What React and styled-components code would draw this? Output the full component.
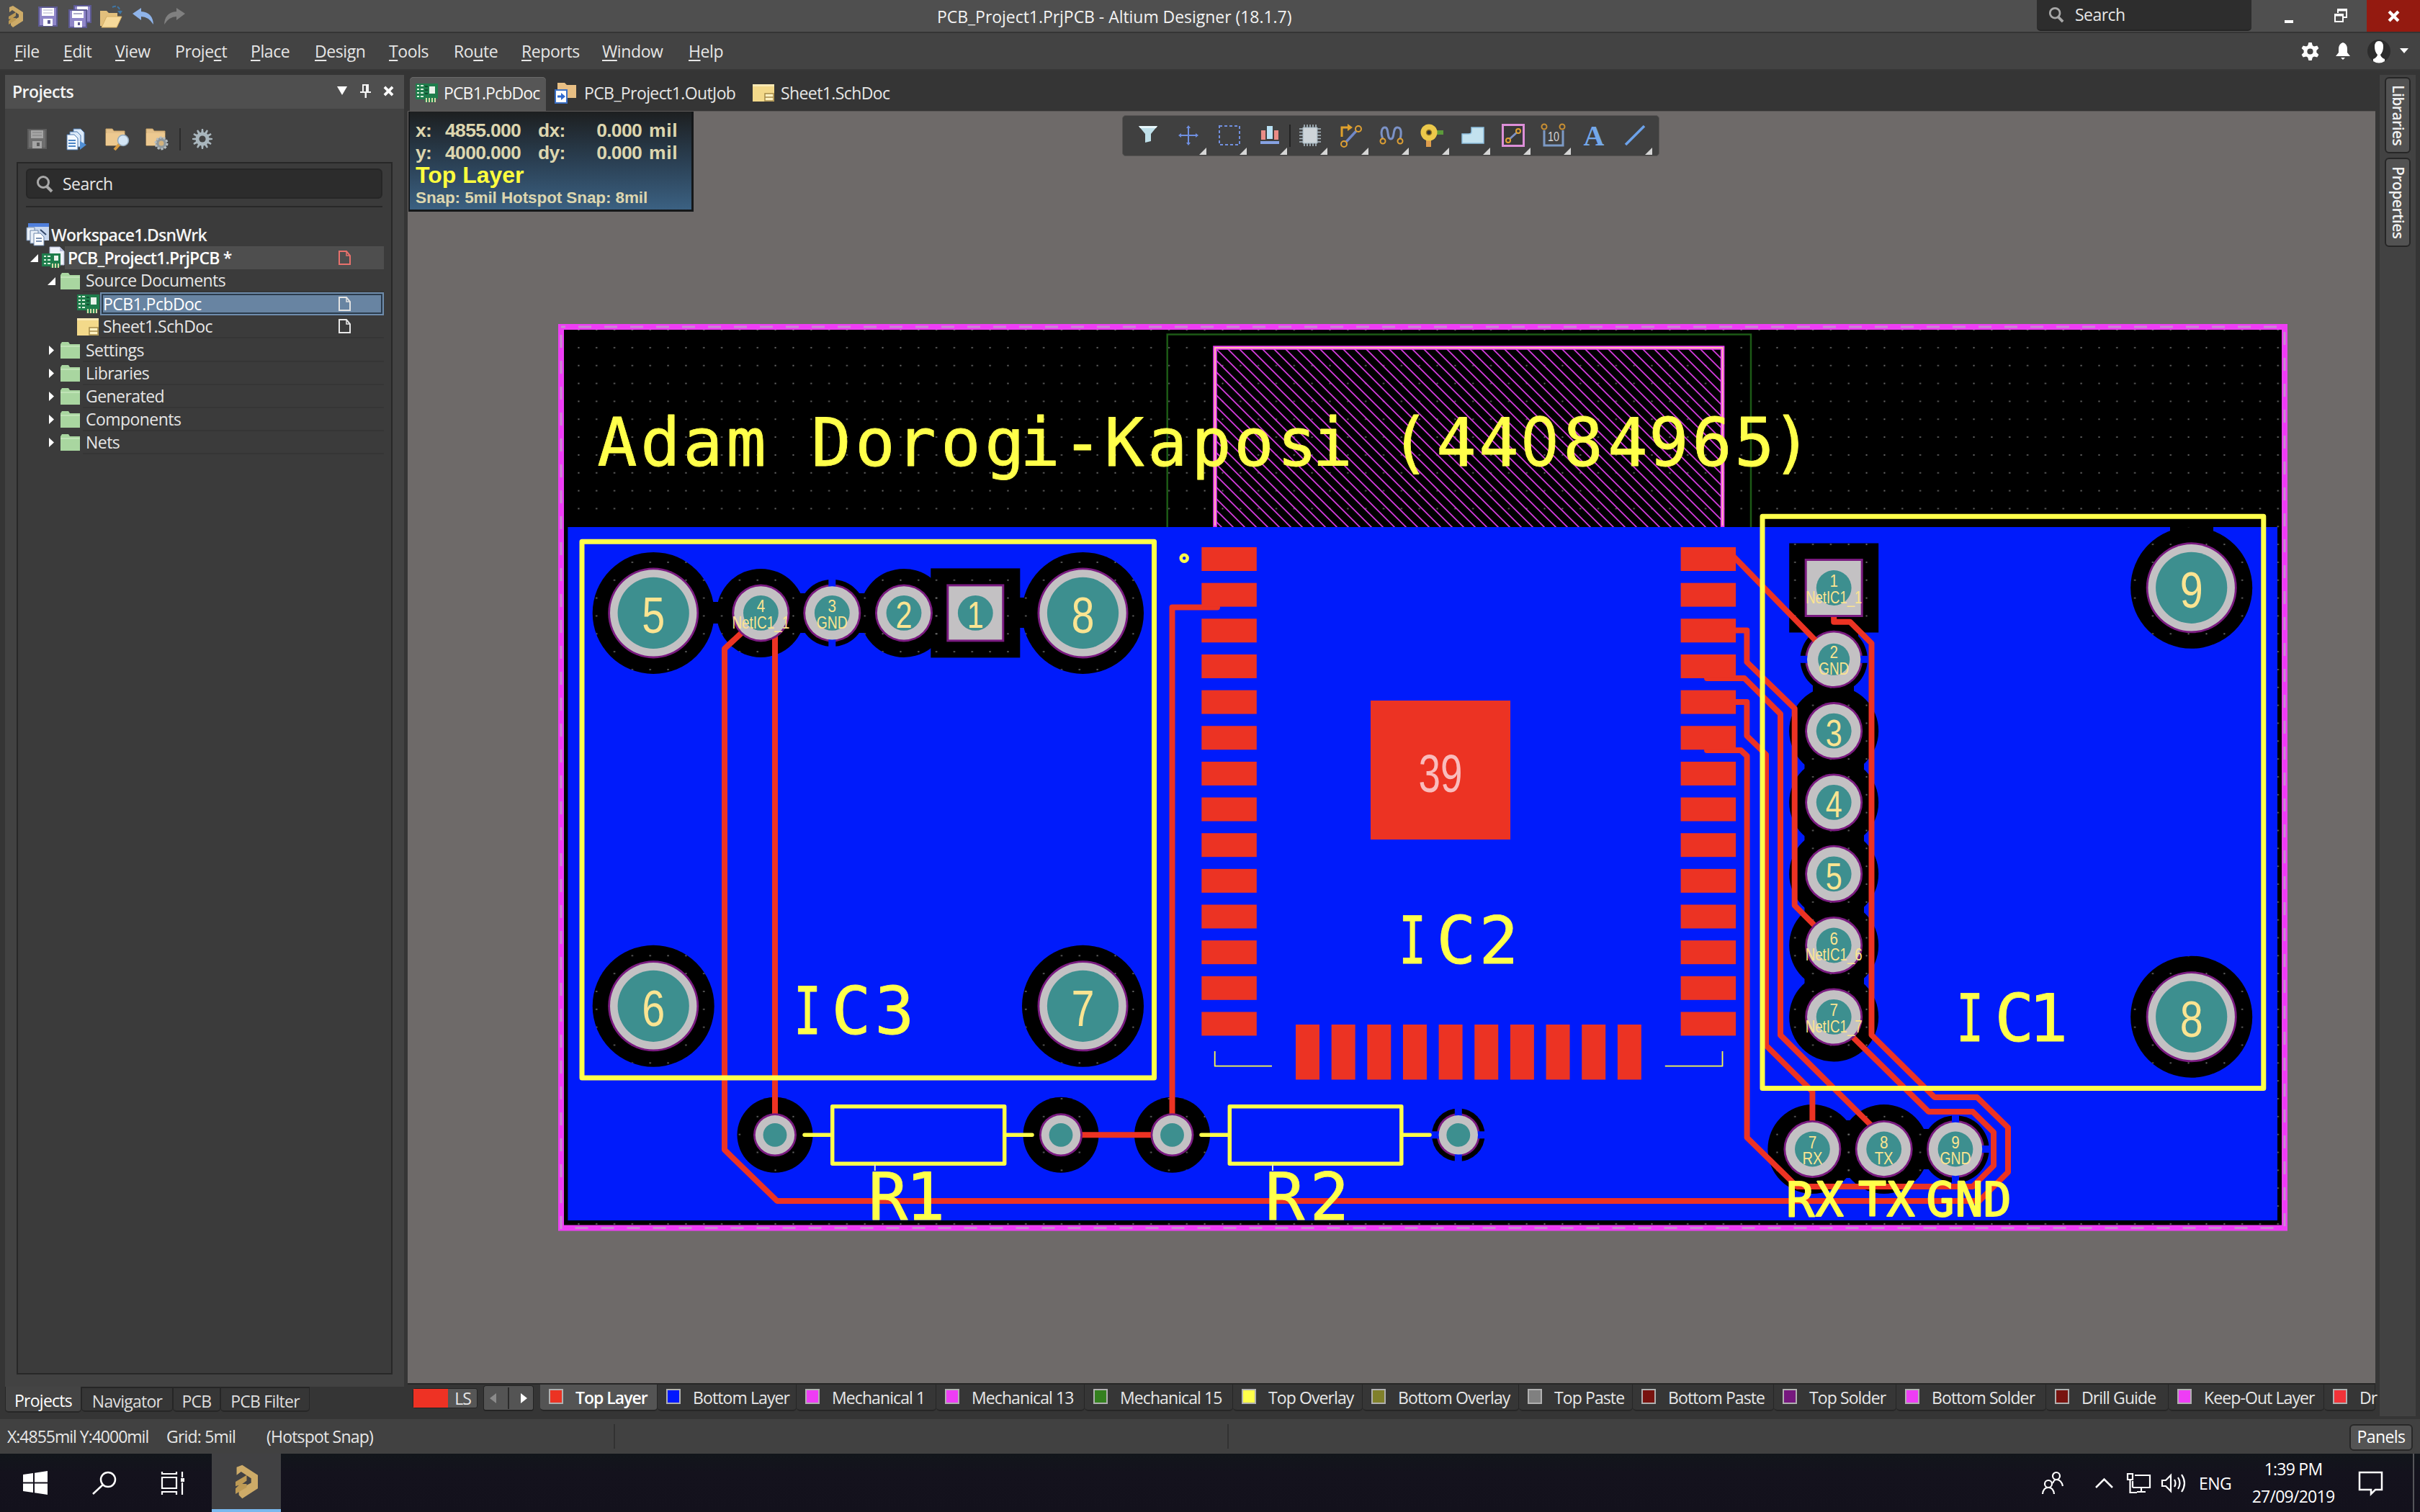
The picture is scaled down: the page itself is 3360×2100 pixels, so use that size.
import React from "react";
import styled, { createGlobalStyle, css } from "styled-components";

const Global = createGlobalStyle`
  * { box-sizing: border-box; }
  html, body { margin: 0; padding: 0; background: #3c3c3c; }
  body { font-family: "Open Sans", "Noto Sans", sans-serif; font-size: 23px; letter-spacing: -0.55px; color: #e6e6e6; }
  svg { display: block; flex: none; overflow: visible; }
`;

const Window = styled.div`
  width: 3360px;
  height: 2100px;
  display: grid;
  grid-template-rows: 46px 52px 1873px 48px 81px;
  overflow: hidden;
`;

/* ---------- title bar ---------- */
const TitleBar = styled.header`
  display: grid;
  grid-template-columns: 1301px 1527px 298px 1fr 74px;
  background: #4f4f4f;
  border-bottom: 2px solid #343434;
  height: 46px;
`;
const QuickAccess = styled.div`
  display: flex;
  align-items: center;
  padding: 0 0 0 12px;
`;
const Slot = styled.span`
  display: flex;
  align-items: center;
  width: ${(p) => p.$w}px;
  height: 100%;
`;
const Title = styled.div`
  line-height: 46px;
  color: #f2f2f2;
  white-space: nowrap;
  letter-spacing: -0.04px;
`;
const TitleSearch = styled.div`
  display: flex;
  align-items: center;
  gap: 15px;
  height: 43px;
  padding: 0 0 1px 16px;
  background: #2d2d2d;
  border-radius: 0 0 5px 5px;
  border-bottom: 2px solid #252525;
`;
const WindowButtons = styled.div`
  display: flex;
  align-items: center;
  padding-left: 45px;
  gap: 55px;
  height: 44px;
`;
const CloseButton = styled.div`
  display: flex;
  align-items: center;
  justify-content: center;
  background: #941a10;
  height: 44px;
`;

/* ---------- menu ---------- */
const MenuBar = styled.nav`
  display: flex;
  background: #434343;
  border-bottom: 2px solid #373737;
  padding-left: 20px;
`;
const MenuItem = styled.span`
  width: ${(p) => p.$w}px;
  line-height: 51px;
  white-space: nowrap;
  letter-spacing: -0.4px;
  u { text-decoration-thickness: 2px; text-underline-offset: 3px; }
`;
const MenuRight = styled.div`
  display: flex;
  align-items: center;
  margin-left: auto;
  padding-right: 16px;
`;

/* ---------- main ---------- */
const Main = styled.main`
  display: grid;
  grid-template-columns: 566px 2732px 62px;
  background: #353535;
`;
const LeftColumn = styled.aside`
  display: grid;
  grid-template-rows: 47px 1775px 1fr;
  padding: 6px 5px 0 7px;
`;
const PanelHeader = styled.div`
  display: flex;
  align-items: center;
  background: #4f4f4f;
  padding: 0 15px 2px 10px;
  font-weight: 600;
  gap: 18px;
  color: #f4f4f4;
  b { flex: 1; font-weight: 600; letter-spacing: -0.55px; }
`;
const PanelBody = styled.div`
  background: #424242;
  display: grid;
  grid-template-rows: 74px 1684px 1fr;
  padding: 0 16px;
`;
const PanelTools = styled.div`
  display: flex;
  align-items: center;
  padding: 10px 0 0 15px;
`;
const ToolSep = styled.i`
  width: 2px;
  height: ${(p) => p.$h}px;
  background: #2b2b2b;
`;
const TreeBox = styled.div`
  background: #3b3b3b;
  border: 2px solid #272727;
  padding: 7px 12px 0 11px;
`;
const SearchField = styled.div`
  display: flex;
  align-items: center;
  gap: 13px;
  height: 42px;
  border-radius: 6px;
  background: #2c2c2c;
  border: 2px solid #262626;
  padding-left: 12px;
  margin-bottom: 10px;
`;
const TreeRule = styled.div`
  height: 2px;
  background: #282828;
  margin-bottom: 22px;
`;
const Row = styled.div`
  display: flex;
  align-items: center;
  height: 32.1px;
  margin-right: -2px;
  padding-left: ${(p) => p.$indent}px;
`;
const Twisty = styled.span`
  display: flex;
  align-items: center;
  justify-content: center;
  width: ${(p) => p.$w}px;
`;
const RowIcon = styled.span`
  width: ${(p) => p.$w}px;
`;
const RowLabel = styled.div`
  flex: 1;
  display: flex;
  align-items: center;
  justify-content: space-between;
  height: 32px;
  padding: 0 46px 0 4px;
  white-space: nowrap;
  border-bottom: 2px solid #353535;
  ${(p) => p.$bold && css`font-weight: 600; letter-spacing: -0.8px; color: #f4f4f4; padding-bottom: 1px;`}
  ${(p) => p.$plain && css`border-bottom: 0; padding-left: 3px;`}
  ${(p) => p.$lit && css`background: #4e4e4e; border-bottom: 0; color: #fff;`}
  ${(p) => p.$selected && css`
    background: #6884a2;
    border: 2px solid #6f8dad;
    outline: 2px solid #2b3b4c;
    outline-offset: -4px;
    padding: 0 44px 0 2px;
    color: #fff;
  `}
`;
const PanelTabs = styled.div`
  display: flex;
  align-items: flex-start;
`;
const PanelTab = styled.span`
  width: ${(p) => p.$w}px;
  height: ${(p) => (p.$active ? 36 : 35)}px;
  line-height: ${(p) => (p.$active ? 38 : 36)}px;
  text-align: center;
  letter-spacing: -0.75px;
  border: 1px solid #262626;
  border-top-width: ${(p) => (p.$active ? 0 : 2)}px;
  border-bottom-width: 2px;
  border-radius: 0 0 5px 5px;
  background: ${(p) => (p.$active ? "#444" : "#363636")};
  color: ${(p) => (p.$active ? "#fff" : "#dedede")};
  white-space: nowrap;
`;

const Center = styled.section`
  display: grid;
  grid-template-rows: 56px 1767px 50px;
  min-width: 0;
`;
const DocTabs = styled.div`
  display: flex;
  align-items: flex-end;
  padding-left: 3px;
`;
const DocTab = styled.div`
  display: flex;
  align-items: center;
  gap: ${(p) => p.$gap}px;
  width: ${(p) => p.$w}px;
  height: 47px;
  padding: 0 0 4px 8px;
  margin-right: 4px;
  white-space: nowrap;
  letter-spacing: ${(p) => (p.$active ? -0.85 : -0.6)}px;
  border-radius: 5px 5px 0 0;
  ${(p) => p.$active && css`background: #565656; box-shadow: inset 0 1px 0 #6a6a6a; color: #f4f4f4;`}
`;
const Canvas = styled.div`
  position: relative;
  background: #6e6a69;
  border-top: 1px solid #5b5857;
  overflow: hidden;
  font-family: "Liberation Sans", Arial, sans-serif;
  letter-spacing: 0;
`;
const Board = styled.svg`
  position: absolute;
  left: 0;
  top: -1px;
`;
const Hud = styled.div`
  position: absolute;
  left: 1px;
  top: 0;
  width: 396px;
  height: 139px;
  padding: 11px 0 0 8px;
  background: linear-gradient(#1d1f20, #2a3f52 50%, #3b6182);
  border: 2px solid #151719;
  border-width: 0 3px 3px 2px;
  color: #ddd6ae;
  font-weight: 700;
`;
const HudRow = styled.div`
  display: grid;
  grid-template-columns: 38px 108px 24px 42px 102px 1fr;
  font-size: 26.500px;
  height: 30.500px;
  line-height: 31px;
  letter-spacing: -0.7px;
`;
const HudValue = styled.span`
  text-align: right;
`;
const HudUnit = styled.span`
  padding-left: 10px;
  letter-spacing: 0.6px;
`;
const HudLayer = styled.div`
  font-size: 32px;
  line-height: 32px;
  letter-spacing: 0;
  color: #ffff3e;
`;
const HudSnap = styled.div`
  font-size: 22.500px;
  line-height: 31px;
  letter-spacing: -0.1px;
`;
const ActiveBar = styled.div`
  position: absolute;
  left: 992px;
  top: 5px;
  width: 746px;
  height: 57px;
  display: flex;
  align-items: stretch;
  padding-left: 7px;
  border-radius: 5px;
  background: #404040;
  border: 1px solid #565453;
`;
const BarCell = styled.div`
  position: relative;
  width: 56.3px;
  display: flex;
  align-items: center;
  justify-content: center;
  padding-bottom: 1px;
`;
const Corner = styled.i`
  position: absolute;
  right: 4px;
  bottom: 1px;
  border-left: 10px solid transparent;
  border-bottom: 10px solid #d6d6d6;
`;
const BarSep = styled.i`
  position: absolute;
  right: -1px;
  top: 12px;
  width: 2px;
  height: 31px;
  background: #232323;
`;

const LayerBar = styled.div`
  display: flex;
  align-items: flex-start;
  border-top: 2px solid #262626;
  padding-left: 7px;
  letter-spacing: -0.9px;
  min-width: 0;
`;
const LayerSet = styled.div`
  flex: none;
  display: flex;
  width: 90px;
  height: 28px;
  margin: 5px 8px 0 0;
  border: 1px solid #232323;
  border-radius: 3px;
  background: #565656;
  line-height: 26px;
  padding-right: 8px;
  justify-content: space-between;
  &::before { content: ""; width: 48px; background: #ee3224; }
`;
const LayerNav = styled.div`
  flex: none;
  display: flex;
  width: 70px;
  height: 36px;
  margin: 1px 9px 0 0;
  background: #545454;
  border: 1px solid #232323;
  border-bottom-width: 2px;
  border-radius: 4px;
  align-items: center;
  justify-content: space-around;
`;
const LayerTab = styled.div`
  flex: none;
  display: flex;
  align-items: center;
  gap: 17px;
  width: ${(p) => p.$w}px;
  height: 37px;
  padding: 0 0 0 12px;
  white-space: nowrap;
  border-right: 1px solid #262626;
  border-bottom: 2px solid #262626;
  border-radius: 0 0 5px 5px;
  background: ${(p) => (p.$active ? "#545454" : "#363636")};
  ${(p) => p.$active && css`font-weight: 600; color: #fff; letter-spacing: -1px;`}
`;
const Swatch = styled.i`
  flex: none;
  width: 20px;
  height: 21px;
  margin-bottom: 3px;
  border: 2px solid #b0b0b0;
  background: ${(p) => p.$c};
`;

const RightDock = styled.aside`
  padding: 6px 6px 4px 6px;
`;
const DockStrip = styled.div`
  height: 1863px;
  background: #424242;
  display: flex;
  flex-direction: column;
  align-items: center;
  gap: 6px;
  padding-top: 3px;
`;
const DockTab = styled.div`
  width: 36px;
  height: ${(p) => p.$h}px;
  display: flex;
  align-items: center;
  justify-content: center;
  writing-mode: vertical-rl;
  background: #525252;
  border: 2px solid #262626;
  border-radius: 6px;
  letter-spacing: ${(p) => p.$ls}px;
  font-size: 21px;
  font-weight: 600;
  padding-left: 2px;
  color: #f0f0f0;
`;

/* ---------- status + taskbar ---------- */
const StatusBar = styled.footer`
  display: grid;
  grid-template-columns: 221px 139px 484px 852px 1fr 88px;
  align-items: center;
  padding: 0 10px 0 10px;
  background: #414141;
  letter-spacing: -0.8px;
  white-space: nowrap;
`;
const StatusCell = styled.span`
  height: 34px;
  line-height: 34px;
  letter-spacing: ${(p) => (p.$tight ? -1 : -0.8)}px;
  border-right: ${(p) => (p.$rule ? "2px solid #323232" : "0")};
`;
const PanelsButton = styled.div`
  height: 37px;
  margin-top: 3px;
  line-height: 31px;
  text-align: center;
  background: #545454;
  border: 2px solid #282828;
  border-radius: 6px;
  color: #fff;
  letter-spacing: -0.6px;
`;
const Taskbar = styled.footer`
  display: flex;
  background: linear-gradient(#12161b, #14121d 35%, #13111c);
  color: #fff;
`;
const TaskButton = styled.div`
  width: ${(p) => p.$w}px;
  display: flex;
  align-items: center;
  justify-content: center;
  ${(p) => p.$active && css`background: #414143; border-bottom: 4px solid #79b8ee;`}
`;
const Tray = styled.div`
  display: flex;
  align-items: center;
  margin-left: auto;
  padding-right: 8px;
`;
const Clock = styled.div`
  width: 142px;
  text-align: center;
  line-height: 37.500px;
  letter-spacing: -0.75px;
`;
const Notify = styled.span`
  display: flex;
  width: 54px;
  padding-left: 20px;
`;
const ShowDesktop = styled.i`
  width: 2px;
  height: 81px;
  background: #55555a;
  margin-left: 41px;
`;

/* ---------- icons ---------- */
const Logo = ({ w, h }) => (
  <svg width={w} height={h} viewBox="0 0 20 30">
    <path d="M1 2 L6 0 L20 9 V21 L6 30 L3 27 V22 L14 16 V12 L5 6 L1 9Z" fill="#cdab68" />
    <path d="M0 15 L10 9 V14 L6 17 H10 V20 L0 26 V21 L3 18 L0 19Z" fill="#bd9a55" />
  </svg>
);
const Floppy = ({ w = 27, h = 28, c = "#8f86c8", d = "#5d5a93", l = "#fff" }) => (
  <svg width={w} height={h} viewBox="0 0 27 28">
    <path d="M1 1H26V27H1Z" fill={c} stroke={d} strokeWidth="2" />
    <path d="M5 2H22V13H5Z" fill={l} />
    <path d="M7 5H20M7 9H20" stroke={d} strokeWidth="1" opacity=".5" />
    <path d="M7 17H20V27H7Z" fill={l} />
    <path d="M13 19H17V24H13Z" fill={d} />
  </svg>
);
const FloppyStack = () => (
  <svg width="32" height="32" viewBox="0 0 32 32">
    <path d="M8 1H31V24H8Z" fill="#8f86c8" stroke="#5d5a93" strokeWidth="2" />
    <path d="M12 2H27V7H12Z" fill="#fff" />
    <path d="M1 7H25V31H1Z" fill="#8f86c8" stroke="#5d5a93" strokeWidth="2" />
    <path d="M5 8H21V18H5Z" fill="#fff" />
    <path d="M7 12H19" stroke="#5d5a93" />
    <path d="M8 22H19V31H8Z" fill="#fff" />
    <path d="M13 24H16V28H13Z" fill="#5d5a93" />
  </svg>
);
const OpenFolder = () => (
  <svg width="32" height="32" viewBox="0 0 32 32">
    <path d="M1 8H10L13 11H25V16H10L4 29H1Z" fill="#e2bf7c" />
    <path d="M10 16H31L24 31H3Z" fill="#f6d99a" stroke="#d9b267" />
    <path d="M18 3Q27 -1 29 9" fill="none" stroke="#3f76a5" strokeWidth="2" strokeDasharray="5 2" />
    <path d="M25 8H32L29 13Z" fill="#3f76a5" />
  </svg>
);
const ArrowBack = ({ c, flip }) => (
  <svg width="30" height="24" viewBox="0 0 30 24" transform={flip ? "scale(-1,1)" : undefined}>
    <path d="M0 8L12 0V5Q28 6 29 23Q22 12 12 12V17Z" fill={c} />
  </svg>
);
const Magnifier = ({ c = "#a8a8a8", s = 24 }) => (
  <svg width={s} height={s} viewBox="0 0 24 24" fill="none" stroke={c} strokeWidth="3">
    <circle cx="10" cy="10" r="7.5" />
    <path d="M15 16L22 23" strokeWidth="4" />
  </svg>
);
const Gear = ({ s = 28, c = "#a9b6bd", hole = "#424242", n = 8, tooth = 2.4, r = 10 }) => (
  <svg width={s} height={s} viewBox="-14 -14 28 28">
    {Array.from({ length: n }, (_, i) => (
      <path key={i} d={`M${-tooth * 0.6} -14H${tooth * 0.6}L${tooth} -8H${-tooth}Z`} fill={c} transform={`rotate(${(i * 360) / n})`} />
    ))}
    <circle r={r} fill={c} />
    <circle r="4.6" fill={hole} />
  </svg>
);
const PagesIcon = () => (
  <svg width="28" height="31" viewBox="0 0 28 31">
    <path d="M10 1H20L25 6V22H10Z" fill="#dbe9f8" stroke="#4c79ad" />
    <path d="M5 5H15L20 10V26H5Z" fill="#dbe9f8" stroke="#4c79ad" />
    <path d="M1 9H11L16 14V30H1Z" fill="#f4f9ff" stroke="#4c79ad" />
    <path d="M3 17H13M3 21H13M3 25H13" stroke="#4c86c6" strokeWidth="2" />
    <path d="M19 18L28 23L19 30Z" fill="#4f8fd6" />
  </svg>
);
const FolderTool = ({ gear }) => (
  <svg width="33" height="31" viewBox="0 0 33 31">
    <path d="M1 1H10L12 4H27V24H1Z" fill="#e3c08a" stroke="#c9a264" />
    <path d="M1 7H27V24H1Z" fill="#edc990" />
    {gear ? (
      <g transform="translate(22 21)">
        <circle r="8" fill="#8d969b" stroke="#b4bcc0" strokeWidth="3" strokeDasharray="3 2" />
        <circle r="3.5" fill="#d3b27c" />
      </g>
    ) : (
      <g>
        <path d="M20 22L13 30" stroke="#d79c43" strokeWidth="4" />
        <circle cx="25" cy="17" r="7.5" fill="#d4e6f5" stroke="#92a9bd" strokeWidth="1.5" />
      </g>
    )}
  </svg>
);
const Pin = () => (
  <svg width="15" height="19" viewBox="0 0 15 19" fill="#f4f4f4">
    <path d="M3 0H12V10H15V12H9V19H6.500V12H0V10H3ZM5 2V10H8V2Z" fillRule="evenodd" />
  </svg>
);
const Cross = ({ s, w = 4 }) => (
  <svg width={s} height={s} viewBox="0 0 14 14" stroke="#fff" strokeWidth={w}>
    <path d="M1 1L13 13M13 1L1 13" />
  </svg>
);
const PcbIcon = ({ w = 31, h = 26 }) => (
  <svg width={w} height={h} viewBox="0 0 31 26">
    <path d="M0 0H31V21H26V26H13V22H0Z" fill="#1f7d4c" />
    <path d="M2 3H5M2 8H5M2 13H5M2 18H5M7 3H11M7 8H11M7 13H11M7 18H11" stroke="#d8f0dc" strokeWidth="2" />
    <path d="M19 4H27V14H19Z" fill="#e9f2ea" />
    <path d="M15 20V26M19 20V26M23 20V26M27 20V26" stroke="#d9d9a8" strokeWidth="2" />
    <path d="M13 4H17M13 9H17M13 14H17" stroke="#124f30" strokeWidth="2" />
  </svg>
);
const SheetIcon = () => (
  <svg width="30" height="24" viewBox="0 0 30 24">
    <path d="M0 0H30V24H0Z" fill="#f3d98a" />
    <path d="M0 0H30V3H0Z" fill="#f9e9b4" />
    <path d="M17 13H29V23H17Z" fill="#fff2c2" stroke="#a58a48" strokeWidth="1.500" />
    <path d="M17 18H29" stroke="#a58a48" strokeWidth="1.500" />
  </svg>
);
const OutJobIcon = () => (
  <svg width="31" height="30" viewBox="0 0 31 30">
    <path d="M4 1H14L17 4H30V22H4Z" fill="#e8bf84" />
    <path d="M1 11H17V29H1Z" fill="#fff" stroke="#3a6fc4" strokeWidth="2" />
    <path d="M4 18.500H9V15L15 20L9 25V21.500H4Z" fill="#2f6ad0" />
  </svg>
);
const WorkspaceIcon = () => (
  <svg width="32" height="32" viewBox="0 0 32 32">
    <path d="M3 1H32V24H3Z" fill="#c9d8ee" />
    <path d="M3 0H32V5H3Z" fill="#4f7fdc" />
    <path d="M1 6H12V24H1Z" fill="#e9f0f8" stroke="#6b84a8" />
    <path d="M6 10H17V28H6Z" fill="#e9f0f8" stroke="#6b84a8" />
    <path d="M11 14H20L25 19V31H11Z" fill="#fbfdff" stroke="#6b84a8" />
    <path d="M14 21H22M14 25H22" stroke="#7b93b5" strokeWidth="2" />
    <path d="M20 9L28 16" stroke="#33486b" strokeWidth="2" />
  </svg>
);
const ProjectIcon = () => (
  <svg width="32" height="30" viewBox="0 0 32 30">
    <path d="M11 0H25L31 6V25H11Z" fill="#eef1fa" stroke="#a8b0cc" />
    <path d="M25 0V6H31Z" fill="#b7bedb" />
    <path d="M0 9H26V27H22V29H12V27H0Z" fill="#1f7d4c" />
    <path d="M3 13H6M3 18H6M3 23H6M8 13H12M8 18H12M8 23H12" stroke="#d8f0dc" strokeWidth="2" />
    <path d="M17 12H23V19H17Z" fill="#e9f2ea" />
    <path d="M15 23V29M19 23V29M23 23V29" stroke="#d9d9a8" strokeWidth="2" />
  </svg>
);
const FolderIcon = () => (
  <svg width="27" height="23" viewBox="0 0 27 23">
    <path d="M0 3L2 0H11L13 3H27V23H0Z" fill="#a9d6a0" />
    <path d="M0 5H27V7H0Z" fill="#bfe3b6" />
  </svg>
);
const PageMark = ({ c }) => (
  <svg width="17" height="20" viewBox="0 0 17 20" fill="none" stroke={c} strokeWidth="2">
    <path d="M1 1H11L16 7V19H1Z" />
    <path d="M11 1V7H16" strokeWidth="1.500" />
  </svg>
);
const TwistyIcon = ({ open }) => (
  <svg width="11" height="13" viewBox="0 0 11 13" fill="#fff">
    <path d={open ? "M11 1V12H0Z" : "M2 0L9 6.500L2 13Z"} />
  </svg>
);

const barIcons = [
  <svg width="26" height="26" viewBox="0 0 26 26"><path d="M0 0H26L17 11V21L9 23V11Z" fill="#bfe0ea" /><path d="M0 0H26L24 3H2Z" fill="#e7f6fa" /></svg>,
  <svg width="28" height="28" viewBox="0 0 28 28" stroke="#6f8fe0" strokeWidth="2" fill="#6f8fe0"><path d="M14 2V26M2 14H26" /><path d="M14 0L17 4H11ZM14 28L17 24H11ZM0 14L4 11V17ZM28 14L24 11V17Z" stroke="none" /></svg>,
  <svg width="30" height="28" viewBox="0 0 30 28"><path d="M1 1H29V27H1Z" fill="none" stroke="#7290e0" strokeWidth="2" strokeDasharray="4 3" /></svg>,
  <svg width="26" height="26" viewBox="0 0 26 26"><path d="M1 6H7V19H1ZM19 6H25V19H19Z" fill="#e98c86" /><path d="M9 0H17V18H9Z" fill="#b9e1f4" /><path d="M0 21H26V25H0Z" fill="#86a2e2" /></svg>,
  <svg width="30" height="32" viewBox="0 0 30 32"><path d="M7 1V31M11 1V31M15 1V31M19 1V31M23 1V31M0 7H30M0 11.500H30M0 16H30M0 20.500H30M0 25H30" stroke="#aebdc6" strokeWidth="1.600" /><path d="M5 5H25V27H5Z" fill="#ced5d9" stroke="#9db0bb" /></svg>,
  <svg width="30" height="32" viewBox="0 0 30 32" fill="none"><path d="M2 18V5H12" stroke="#e0a12c" strokeWidth="3" /><path d="M10 0L17 5L10 10Z" fill="#e0a12c" /><path d="M8 25L22 10" stroke="#7189c8" strokeWidth="3.500" /><circle cx="25" cy="7" r="4" stroke="#dfa033" strokeWidth="2" /><circle cx="5" cy="28" r="4" stroke="#dfa033" strokeWidth="2" /></svg>,
  <svg width="32" height="26" viewBox="0 0 32 26" fill="none"><path d="M4 18C0 8 3 2 7 2C13 2 9 18 15 18C21 18 17 2 24 2C30 2 30 10 28 18" stroke="#7c92c6" strokeWidth="3" /><circle cx="4" cy="21" r="3.500" stroke="#dfa033" strokeWidth="2" /><circle cx="28" cy="21" r="3.500" stroke="#dfa033" strokeWidth="2" /></svg>,
  <svg width="32" height="32" viewBox="0 0 32 32"><path d="M20 9H32V15H20Z" fill="#5c9a3a" /><path d="M8 20H15V32H8Z" fill="#dd9c4d" /><circle cx="12" cy="12" r="11.500" fill="#ecc94b" /><circle cx="12" cy="12" r="3.500" fill="#333" stroke="#9a7b1e" strokeWidth="1.500" /></svg>,
  <svg width="32" height="24" viewBox="0 0 32 24"><path d="M14 1H31V23H1V10H10Q14 10 14 7Z" fill="#c3e2ef" stroke="#8dbede" strokeWidth="1.500" /></svg>,
  <svg width="32" height="32" viewBox="0 0 32 32" fill="none"><path d="M1.500 1.500H30.500V30.500H1.500Z" stroke="#dd8fd8" strokeWidth="3" fill="#383838" /><path d="M11 21L21 12" stroke="#7c92c6" strokeWidth="3" /><circle cx="23" cy="10" r="3" stroke="#dfa033" strokeWidth="2" /><circle cx="9" cy="23" r="3" stroke="#dfa033" strokeWidth="2" /></svg>,
  <svg width="32" height="32" viewBox="0 0 32 32" fill="none"><path d="M3 9V30H29V9" stroke="#7c9ac6" strokeWidth="3" /><circle cx="3" cy="4" r="3.500" stroke="#c98f33" strokeWidth="2" /><circle cx="28" cy="4" r="3.500" stroke="#c98f33" strokeWidth="2" /><text x="16" y="24" fontSize="18" fill="#d4d4d4" textAnchor="middle" textLength="16" lengthAdjust="spacingAndGlyphs" letterSpacing="0">10</text></svg>,
  <svg width="28" height="28" viewBox="0 0 28 28"><text x="14" y="28" fontSize="40" fontWeight="700" fontFamily="Liberation Serif, serif" fill="#74a8ea" textAnchor="middle">A</text></svg>,
  <svg width="28" height="28" viewBox="0 0 28 28"><path d="M1 27L27 1" stroke="#6ca2ea" strokeWidth="3.500" /></svg>,
];

/* ---------- board drawing ---------- */
const RED = "#ec3323";
const YEL = "#ffff4a";
const MAG = "#ee3df5";
const BLUE = "#001bfb";

const Glyphs = ({ t, xs, y, size, bold = 0.8 }) => (
  <text
    y={y}
    x={xs.join(" ")}
    fontSize={size}
    fontFamily="DejaVu Sans Mono, monospace"
    fill={YEL}
    stroke={YEL}
    strokeWidth={bold}
    strokeLinejoin="round"
    textAnchor="middle"
  >
    {t.split(/([0I])/).map((s, i) => {
      if (s === "0") return <tspan key={i} fontFamily="DejaVu Sans, sans-serif" textLength={size * 0.58} lengthAdjust="spacingAndGlyphs">0</tspan>;
      if (s === "I") return <tspan key={i} textLength={size * 0.42} lengthAdjust="spacingAndGlyphs">I</tspan>;
      return s;
    })}
  </text>
);

const PadText = ({ x, y, size, len, children, fill = "#fbe491" }) => (
  <text x={x} y={y + size * 0.358} fontSize={size} fill={fill} textAnchor="middle" textLength={len} lengthAdjust="spacingAndGlyphs">
    {children}
  </text>
);

const pads = [
  { x: 907.2, y: 851.4, r: 63, k: 84.5, h: 49.600, n: "5" },
  { x: 1503.5, y: 851.4, r: 63, k: 84.5, h: 49.600, n: "8" },
  { x: 907.2, y: 1397.3, r: 63, k: 84.5, h: 49.600, n: "6" },
  { x: 1503.5, y: 1397.3, r: 63, k: 84.5, h: 49.600, n: "7" },
  { x: 3042.7, y: 816.3, r: 63, k: 84.5, h: 49.600, n: "9" },
  { x: 3042.7, y: 1412.2, r: 63, k: 84.5, h: 49.600, n: "8" },
  { x: 1056.4, y: 851.4, r: 40, k: 61.5, h: 24.4, n: "4", net: "NetIC1_1", w: 80 },
  { x: 1155.3, y: 851.4, r: 40, k: 46.7, h: 24.4, n: "3", net: "GND", w: 43, gaps: "v" },
  { x: 1255, y: 851.4, r: 40, k: 61.5, h: 24.4, n: "2" },
  { x: 1354.3, y: 851.4, r: 40, k: 62, h: 24.4, n: "1", square: true },
  { x: 2546.2, y: 816.5, r: 40.5, k: 62, h: 24.4, n: "1", net: "NetIC1_1", w: 78, square: true },
  { x: 2546.2, y: 915.8, r: 40, k: 46.7, h: 22, n: "2", net: "GND", w: 42, gaps: "h" },
  { x: 2546.2, y: 1015.1, r: 40, k: 62, h: 24.4, n: "3" },
  { x: 2546.2, y: 1114.4, r: 40, k: 62, h: 24.4, n: "4" },
  { x: 2546.2, y: 1213.8, r: 40, k: 62, h: 24.4, n: "5" },
  { x: 2546.2, y: 1313, r: 40, k: 62, h: 24.4, n: "6", net: "NetIC1_6", w: 79 },
  { x: 2546.2, y: 1412.4, r: 40, k: 62, h: 24.4, n: "7", net: "NetIC1_7", w: 79 },
  { x: 2516.4, y: 1596, r: 40, k: 62, h: 24.4, n: "7", net: "RX", w: 28 },
  { x: 2615.7, y: 1596, r: 40, k: 62, h: 24.4, n: "8", net: "TX", w: 26 },
  { x: 2715, y: 1596, r: 40, k: 46.7, h: 24.4, n: "9", net: "GND", w: 43, gaps: "vr" },
  { x: 1076, y: 1576.3, r: 30, k: 52.5, h: 16.4 },
  { x: 1473, y: 1576.3, r: 30, k: 52.5, h: 16.4 },
  { x: 1627.5, y: 1576.3, r: 30, k: 52.5, h: 16.4 },
  { x: 2024.8, y: 1576.3, r: 30, k: 36.8, h: 16.4, gaps: "vh" },
];

const Clearance = ({ p }) =>
  p.square ? (
    <rect x={p.x - p.k} y={p.y - p.k} width={2 * p.k} height={2 * p.k} />
  ) : (
    <circle cx={p.x} cy={p.y} r={p.k} />
  );

const Thermal = ({ p }) => (
  <g fill={BLUE}>
    {p.gaps.includes("v") && <rect x={p.x - 5} y={p.y - p.k - 1} width="10" height={2 * p.k + 2} />}
    {p.gaps.includes("h") && <rect x={p.x - p.k - 1} y={p.y - 5} width={2 * p.k + 2} height="10" />}
    {p.gaps.includes("r") && <rect x={p.x} y={p.y - 5} width={p.k + 1} height="10" />}
  </g>
);

const Pad = ({ p }) => {
  const big = p.r > 50;
  return (
    <g>
      {p.square ? (
        <rect x={p.x - p.r + 1.5} y={p.y - p.r + 1.5} width={2 * p.r - 3} height={2 * p.r - 3} fill="#c3c1c3" stroke="#7a1a80" strokeWidth="3" />
      ) : (
        <g>
          {!p.gaps && <circle cx={p.x} cy={p.y} r={p.r} fill="#7a1a80" />}
          <circle cx={p.x} cy={p.y} r={p.r - 2.8} fill="#c3c1c3" />
        </g>
      )}
      <circle cx={p.x} cy={p.y} r={p.h} fill="#3d8f8f" />
      {p.n && !p.net && <PadText x={p.x} y={p.y + (big ? 3 : 2.5)} size={big ? 70 : 51} len={big ? 32 : 23}>{p.n}</PadText>}
      {p.net && <PadText x={p.x} y={p.y - 10} size={24} len={11.5}>{p.n}</PadText>}
      {p.net && <PadText x={p.x} y={p.y + 13} size={23} len={p.w}>{p.net}</PadText>}
    </g>
  );
};

const traces = [
  "M1056.4 854L1006 901V1597L1079 1668H2748L2788 1628V1566L2745 1524H2686L2598.500 1437.500V893.500L2568.600 863.700H2546.200V853",
  "M1076 865V1560",
  "M1490 1576.300H1610",
  "M1627.500 1560V843.600H1690",
  "M2408 774L2530 899",
  "M2400 875.400H2425.400V919.500L2491.700 984V1257.500L2530 1296",
  "M2370 942H2422L2472 991.600V1437.700L2605 1570",
  "M2400 975H2425.400V1022L2452 1048V1452L2516.400 1516V1570",
  "M2370 1042H2417L2425.600 1050V1580L2495 1648H2739L2768 1619V1572.700L2739 1544H2677.700L2565 1433",
];

const BoardView = () => (
  <Board width="2732" height="1767" viewBox="566 154 2732 1767">
    <defs>
      <pattern id="grid" x="801.9" y="481.9" width="24.836" height="24.836" patternUnits="userSpaceOnUse">
        <rect x="0.500" y="0" width="2" height="2" fill="#6a6a6a" />
      </pattern>
      <pattern id="hatch" x="1687" y="483" width="16" height="16" patternUnits="userSpaceOnUse">
        <path d="M-2 -2L18 18M-2 14L2 18M14 -2L18 2" stroke="#d43bdd" strokeWidth="1.800" />
      </pattern>
    </defs>
    <rect x="779" y="454" width="2393" height="1251.5" fill="#000" />
    <rect x="783" y="458" width="2385" height="268" fill="url(#grid)" />
    <rect x="783" y="726" width="2385" height="976" fill="url(#grid)" />
    <rect x="783" y="727" width="2378" height="6" fill="#000" />
    <rect x="788.4" y="732" width="2373.600" height="963" fill={BLUE} />
    <path d="M1620.700 732V464.500H2431V732" fill="none" stroke="#1c5a16" strokeWidth="2.500" />
    <rect x="1687" y="483" width="704.600" height="249" fill="url(#hatch)" />
    <path d="M1687 732V483H2391.600V732" fill="none" stroke={MAG} strokeWidth="5.500" />
    <path d="M1687 730V483H2391.600V730" fill="none" stroke="#fcc0a8" strokeWidth="1.800" />

    <g fill="#000">
      {pads.map((p, i) => <Clearance key={i} p={p} />)}
      <rect x="985" y="836" width="20" height="30" />
      <rect x="1105" y="824" width="20" height="55" />
      <rect x="1185" y="824" width="20" height="55" />
      <rect x="1410" y="830" width="20" height="42" />
      <rect x="2517" y="940" width="57" height="30" />
      <rect x="2505.500" y="1015" width="82.500" height="397" />
      <rect x="2513" y="876" width="67" height="10" />
      <rect x="2560" y="1556" width="12" height="80" />
      <rect x="2668" y="1568" width="12" height="56" />
      <rect x="3013" y="728" width="60" height="20" />
    </g>
    <g fill="url(#grid)">
      {pads.filter((p) => p.k > 50).map((p, i) => <Clearance key={i} p={p} />)}
    </g>
    <g fill="#7a1a80">
      {pads.filter((p) => p.gaps).map((p, i) => <circle key={i} cx={p.x} cy={p.y} r={p.r} />)}
    </g>
    {pads.filter((p) => p.gaps).map((p, i) => <Thermal key={i} p={p} />)}

    <g fill="none" stroke={RED} strokeWidth="8" strokeLinejoin="round" strokeLinecap="round">
      {traces.map((d) => <path key={d} d={d} />)}
    </g>
    <g fill={RED}>
      {Array.from({ length: 14 }, (_, i) => (
        <React.Fragment key={i}>
          <rect x="1668.300" y={760 + i * 49.65} width="76.500" height="33" />
          <rect x="2333.600" y={760 + i * 49.65} width="76.500" height="33" />
        </React.Fragment>
      ))}
      {Array.from({ length: 10 }, (_, i) => (
        <rect key={i} x={1799 + i * 49.65} y="1423" width="33" height="76.500" />
      ))}
      <rect x="1903" y="973" width="194" height="193" />
    </g>
    <PadText x={2000} y={1074} size={74} len={61} fill="#f9bcbc">39</PadText>

    {pads.map((p, i) => <Pad key={i} p={p} />)}

    <g fill="none" stroke={YEL} strokeWidth="7" strokeLinejoin="round">
      <rect x="808" y="752.300" width="794.500" height="744.700" />
      <rect x="2447" y="717.200" width="695.800" height="794.400" />
      <g strokeWidth="5.500" strokeLinecap="round">
        <rect x="1155.700" y="1536.700" width="239" height="79.600" />
        <rect x="1707.300" y="1536.700" width="238.500" height="79.600" />
        <path d="M1117 1576.300H1153M1397 1576.300H1433M1668 1576.300H1705M1948 1576.300H1985" />
      </g>
      <circle cx="1644.200" cy="775.200" r="4.500" strokeWidth="4.500" />
      <path d="M1686.700 1460V1480.700H1766M2311.800 1480.700H2391.500V1460" strokeWidth="1.800" />
      <path d="M1214.800 1617V1626M1767 1617V1626" strokeWidth="2" stroke="#e9e9c8" />
    </g>

    <Glyphs
      t="Adam Dorogi-Kaposi (44084965)"
      xs={[857, 917, 976, 1036, 1096, 1154, 1215, 1272, 1334, 1395, 1444, 1503, 1561, 1621, 1682, 1741, 1801, 1850, 1900, 1958, 2022, 2081, 2138, 2198, 2260, 2317, 2377, 2436, 2488]}
      y={646.500}
      size={92}
    />
    <Glyphs t="IC3" xs={[1121, 1182, 1242]} y={1435.500} size={91} />
    <Glyphs t="IC2" xs={[1961, 2022, 2081]} y={1338} size={91} />
    <Glyphs t="IC1" xs={[2735, 2797, 2844]} y={1445.500} size={91} />
    <Glyphs t="R1" xs={[1233, 1285]} y={1694} size={91} />
    <Glyphs t="R2" xs={[1784, 1846]} y={1694} size={91} />
    <Glyphs t="RX" xs={[2499.500, 2540]} y={1689} size={65} bold={2} />
    <Glyphs t="TX" xs={[2599.500, 2639]} y={1689} size={65} bold={2} />
    <Glyphs t="GND" xs={[2694, 2734, 2773]} y={1689} size={65} bold={2} />

    <rect x="779" y="454" width="2393" height="1251.500" fill="none" stroke={MAG} strokeWidth="8" />
    <rect x="779" y="454" width="2393" height="1251.500" fill="none" stroke="#c98bcf" strokeWidth="3" strokeDasharray="18 18" strokeDashoffset="12" />
  </Board>
);

/* ---------- data ---------- */
const menu = [
  ["", "F", "ile", 68], ["", "E", "dit", 72], ["", "V", "iew", 83], ["Proje", "c", "t", 105], ["", "P", "lace", 89],
  ["", "D", "esign", 103], ["", "T", "ools", 90], ["Ro", "u", "te", 94], ["", "R", "eports", 112], ["", "W", "indow", 120], ["", "H", "elp", 80],
];
const layers = [
  ["Top Layer", RED, 163, true], ["Bottom Layer", "#0018ff", 193], ["Mechanical 1", MAG, 194], ["Mechanical 13", MAG, 206],
  ["Mechanical 15", "#34801f", 206], ["Top Overlay", "#ffff4a", 180], ["Bottom Overlay", "#80802a", 217], ["Top Paste", "#808080", 158],
  ["Bottom Paste", "#78130f", 196], ["Top Solder", "#76187e", 170], ["Bottom Solder", MAG, 208], ["Drill Guide", "#78130f", 170],
  ["Keep-Out Layer", MAG, 216], ["Dr", "#f23339", 71],
];

export default function App() {
  return (
    <>
      <Global />
      <Window>
        <TitleBar>
          <QuickAccess>
            <Slot $w={41}><Logo w={20} h={30} /></Slot>
            <Slot $w={42}><Floppy /></Slot>
            <Slot $w={43}><FloppyStack /></Slot>
            <Slot $w={46}><OpenFolder /></Slot>
            <Slot $w={43}><ArrowBack c="#8fb4ea" /></Slot>
            <Slot $w={43}><ArrowBack c="#808080" flip /></Slot>
          </QuickAccess>
          <Title>PCB_Project1.PrjPCB - Altium Designer (18.1.7)</Title>
          <TitleSearch><Magnifier s={22} />Search</TitleSearch>
          <WindowButtons>
            <svg width="14" height="22" viewBox="0 0 14 22"><path d="M1 17H13V21H1Z" fill="#fff" /></svg>
            <svg width="20" height="20" viewBox="0 0 20 20" fill="none" stroke="#fff" strokeWidth="2"><path d="M6 6V1H18V12H13" /><path d="M6 2H18" strokeWidth="3" /><path d="M2 8H13V18H2Z" /><path d="M2 9H13" strokeWidth="3" /></svg>
          </WindowButtons>
          <CloseButton><Cross s={15} w={4} /></CloseButton>
        </TitleBar>

        <MenuBar>
          {menu.map(([a, u, b, w]) => (
            <MenuItem key={a + u + b} $w={w}>{a}<u>{u}</u>{b}</MenuItem>
          ))}
          <MenuRight>
            <Slot $w={47}><Gear s={25} c="#fff" hole="#434343" n={6} tooth={4} /></Slot>
            <Slot $w={45}>
              <svg width="22" height="24" viewBox="0 0 22 24" fill="#fff"><path d="M11 0Q17 2 17 9V14L21 19H1L5 14V9Q5 2 11 0ZM8 21H14L11 24Z" /></svg>
            </Slot>
            <Slot $w={45}>
              <svg width="32" height="34" viewBox="0 0 32 34"><circle cx="16" cy="17" r="16" fill="#2c2c2c" /><path d="M16 3Q22 3 22 11Q22 18 18 22Q19 26 24 28V31Q16 36 8 31V28Q13 26 14 22Q10 18 10 11Q10 3 16 3Z" fill="#fff" /></svg>
            </Slot>
            <svg width="12" height="8" viewBox="0 0 12 8" fill="#fff"><path d="M0 0H12L6 7Z" /></svg>
          </MenuRight>
        </MenuBar>

        <Main>
          <LeftColumn>
            <PanelHeader>
              <b>Projects</b>
              <svg width="14" height="13" viewBox="0 0 14 13" fill="#fff"><path d="M0 0H14L7 12Z" /></svg>
              <Pin />
              <Cross s={13} />
            </PanelHeader>
            <PanelBody>
              <PanelTools>
                <Slot $w={54}><Floppy c="#6f6f6f" d="#5c5c5c" l="#a5a5a5" /></Slot>
                <Slot $w={54}><PagesIcon /></Slot>
                <Slot $w={56}><FolderTool /></Slot>
                <Slot $w={47}><FolderTool gear /></Slot>
                <Slot $w={18}><ToolSep $h={31} /></Slot>
                <Gear n={12} tooth={1.8} r={9.5} />
              </PanelTools>
              <TreeBox>
                <SearchField><Magnifier />Search</SearchField>
                <TreeRule />
                <Row $indent={-2}><RowIcon $w={32}><WorkspaceIcon /></RowIcon><RowLabel $bold $plain>Workspace1.DsnWrk</RowLabel></Row>
                <Row $indent={0}><Twisty $w={22}><TwistyIcon open /></Twisty><RowIcon $w={32}><ProjectIcon /></RowIcon><RowLabel $bold $lit>PCB_Project1.PrjPCB *<PageMark c="#e8716c" /></RowLabel></Row>
                <Row $indent={22}><Twisty $w={26}><TwistyIcon open /></Twisty><RowIcon $w={31}><FolderIcon /></RowIcon><RowLabel>Source Documents</RowLabel></Row>
                <Row $indent={71}><RowIcon $w={32}><PcbIcon /></RowIcon><RowLabel $selected>PCB1.PcbDoc<PageMark c="#e2e2e2" /></RowLabel></Row>
                <Row $indent={71}><RowIcon $w={32}><SheetIcon /></RowIcon><RowLabel>Sheet1.SchDoc<PageMark c="#e8e8e8" /></RowLabel></Row>
                {["Settings", "Libraries", "Generated", "Components", "Nets"].map((n) => (
                  <Row key={n} $indent={22}><Twisty $w={26}><TwistyIcon /></Twisty><RowIcon $w={31}><FolderIcon /></RowIcon><RowLabel>{n}</RowLabel></Row>
                ))}
              </TreeBox>
            </PanelBody>
            <PanelTabs>
              <PanelTab $w={106} $active>Projects</PanelTab>
              <PanelTab $w={127}>Navigator</PanelTab>
              <PanelTab $w={66}>PCB</PanelTab>
              <PanelTab $w={124}>PCB Filter</PanelTab>
            </PanelTabs>
          </LeftColumn>

          <Center>
            <DocTabs>
              <DocTab $w={189} $gap={8} $active><PcbIcon />PCB1.PcbDoc</DocTab>
              <DocTab $w={271} $gap={10}><OutJobIcon />PCB_Project1.OutJob</DocTab>
              <DocTab $w={220} $gap={9}><SheetIcon />Sheet1.SchDoc</DocTab>
            </DocTabs>
            <Canvas>
              <BoardView />
              <Hud>
                <HudRow><span>x:</span><HudValue>4855.000</HudValue><i /><span>dx:</span><HudValue>0.000</HudValue><HudUnit>mil</HudUnit></HudRow>
                <HudRow><span>y:</span><HudValue>4000.000</HudValue><i /><span>dy:</span><HudValue>0.000</HudValue><HudUnit>mil</HudUnit></HudRow>
                <HudLayer>Top Layer</HudLayer>
                <HudSnap>Snap: 5mil Hotspot Snap: 8mil</HudSnap>
              </Hud>
              <ActiveBar>
                {barIcons.map((icon, i) => (
                  <BarCell key={i}>
                    {icon}
                    {i !== 0 && i !== 11 && <Corner />}
                    {i === 3 && <BarSep />}
                  </BarCell>
                ))}
              </ActiveBar>
            </Canvas>
            <LayerBar>
              <LayerSet>LS</LayerSet>
              <LayerNav>
                <svg width="9" height="14" viewBox="0 0 9 14"><path d="M9 0V14L0 7Z" fill="#8a8a8a" /></svg>
                <ToolSep $h={30} />
                <svg width="9" height="14" viewBox="0 0 9 14"><path d="M0 0V14L9 7Z" fill="#fff" /></svg>
              </LayerNav>
              {layers.map(([n, c, w, a]) => (
                <LayerTab key={n} $w={w} $active={a}><Swatch $c={c} />{n}</LayerTab>
              ))}
            </LayerBar>
          </Center>

          <RightDock>
            <DockStrip>
              <DockTab $h={106} $ls={-0.5}>Libraries</DockTab>
              <DockTab $h={124} $ls={-0.5}>Properties</DockTab>
            </DockStrip>
          </RightDock>
        </Main>

        <StatusBar>
          <StatusCell $tight>X:4855mil Y:4000mil</StatusCell>
          <StatusCell>Grid: 5mil</StatusCell>
          <StatusCell $rule>(Hotspot Snap)</StatusCell>
          <StatusCell $rule />
          <StatusCell />
          <PanelsButton>Panels</PanelsButton>
        </StatusBar>

        <Taskbar>
          <TaskButton $w={98}>
            <svg width="34" height="33" viewBox="0 0 34 33" fill="#fff"><path d="M0 5L14 3V15.500H0ZM16 2.700L34 0V15.500H16ZM0 17.500H14V30L0 28ZM16 17.500H34V33L16 30.300Z" /></svg>
          </TaskButton>
          <TaskButton $w={94}>
            <svg width="34" height="32" viewBox="0 0 34 32" fill="none" stroke="#fff" strokeWidth="2.500"><circle cx="22" cy="11" r="10" /><path d="M15 18L1 31" /></svg>
          </TaskButton>
          <TaskButton $w={96}>
            <svg width="34" height="32" viewBox="0 0 34 32" fill="none" stroke="#fff" strokeWidth="2.200"><path d="M2 8H22V23H2ZM2 0V3H22V0M2 32V28H22V32M30 0V8M30 15V32" /><path d="M28 9H33V14H28Z" fill="#fff" stroke="none" /></svg>
          </TaskButton>
          <TaskButton $w={6} />
          <TaskButton $w={96} $active><Logo w={31} h={48} /></TaskButton>
          <Tray>
            <Slot $w={74}>
              <svg width="30" height="32" viewBox="0 0 30 32" fill="none" stroke="#fff" strokeWidth="2.200"><circle cx="20" cy="6" r="5" /><circle cx="9" cy="17" r="5" /><path d="M1 31Q2 22 9 22Q16 22 17 31M15 16Q17 11 20 11Q27 11 29 20" /></svg>
            </Slot>
            <Slot $w={44}>
              <svg width="25" height="14" viewBox="0 0 25 14" fill="none" stroke="#fff" strokeWidth="2.500"><path d="M1 13L12.500 1.500L24 13" /></svg>
            </Slot>
            <Slot $w={48}>
              <svg width="34" height="28" viewBox="0 0 34 28" fill="none" stroke="#fff" strokeWidth="2.200"><path d="M11 3H32V20H8M8 20V11M14 26H26M20 20V26" /><path d="M1 1H8V9H1ZM4.500 9V27H14" /></svg>
            </Slot>
            <Slot $w={52}>
              <svg width="34" height="26" viewBox="0 0 34 26" fill="none" stroke="#fff" strokeWidth="2.200"><path d="M1 9H6L13 2V24L6 17H1ZM18 8Q21 13 18 18M23 5Q28 13 23 21M28 1Q36 13 28 25" /></svg>
            </Slot>
            <Slot $w={60}>ENG</Slot>
            <Clock>1:39 PM<br />27/09/2019</Clock>
            <Notify>
              <svg width="34" height="34" viewBox="0 0 34 34" fill="none" stroke="#fff" strokeWidth="2.500"><path d="M1 2H32V26H23L17 32V26H1Z" /></svg>
            </Notify>
            <ShowDesktop />
          </Tray>
        </Taskbar>
      </Window>
    </>
  );
}
